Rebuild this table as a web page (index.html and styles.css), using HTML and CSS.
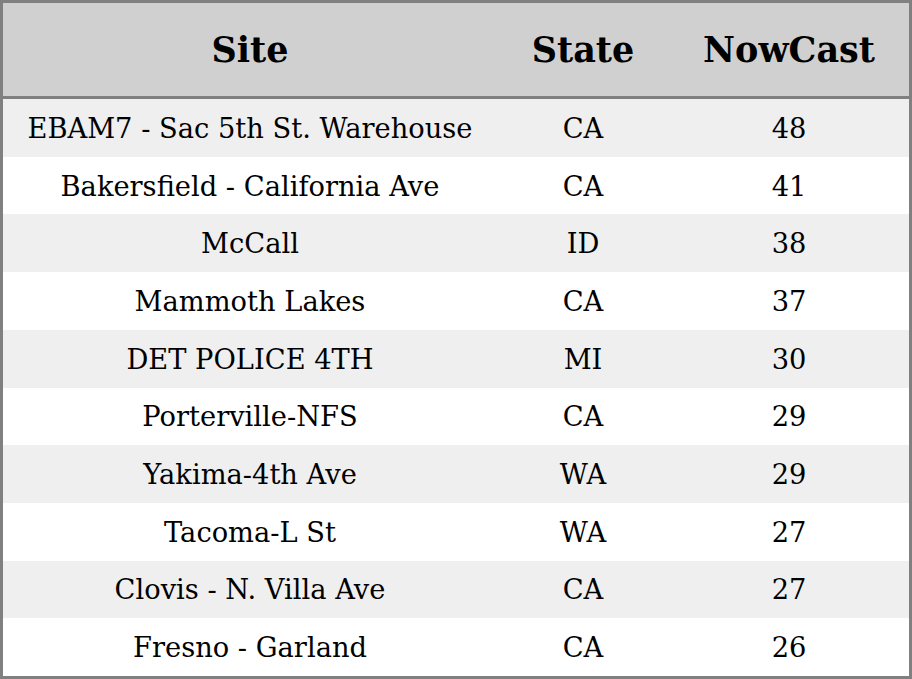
FILE: index.html
```html
<!DOCTYPE html>
<html>
<head>
<meta charset="utf-8">
<link rel="stylesheet" href="styles.css">
</head>
<body>
<div class="aq-table">
  <div class="row head"><div>Site</div><div>State</div><div>NowCast</div></div>
  <div class="row"><div>EBAM7 - Sac 5th St. Warehouse</div><div>CA</div><div>48</div></div>
  <div class="row"><div>Bakersfield - California Ave</div><div>CA</div><div>41</div></div>
  <div class="row"><div>McCall</div><div>ID</div><div>38</div></div>
  <div class="row"><div>Mammoth Lakes</div><div>CA</div><div>37</div></div>
  <div class="row"><div>DET POLICE 4TH</div><div>MI</div><div>30</div></div>
  <div class="row"><div>Porterville-NFS</div><div>CA</div><div>29</div></div>
  <div class="row"><div>Yakima-4th Ave</div><div>WA</div><div>29</div></div>
  <div class="row"><div>Tacoma-L St</div><div>WA</div><div>27</div></div>
  <div class="row"><div>Clovis - N. Villa Ave</div><div>CA</div><div>27</div></div>
  <div class="row"><div>Fresno - Garland</div><div>CA</div><div>26</div></div>
</div>
</body>
</html>
```
FILE: styles.css
```css
html, body { margin: 0; padding: 0; background: #fff; }
.aq-table {
  box-sizing: border-box;
  width: 912px;
  height: 679px;
  border: 3px solid #808080;
  font-family: "DejaVu Serif", serif;
  color: #000;
  display: grid;
  grid-template-rows: 96px repeat(10, 1fr);
}
.row {
  display: grid;
  grid-template-columns: 494px 172px 1fr;
  align-items: center;
  text-align: center;
  font-size: 27.3px;
  padding-top: 1px;
}
.row:nth-child(even) { background: #efefef; }
.row:nth-child(odd) { background: #fff; }
.row.head {
  background: #d0d0d0;
  font-weight: bold;
  font-size: 35px;
  padding-top: 0;
  border-bottom: 3px solid #808080;
}
```
